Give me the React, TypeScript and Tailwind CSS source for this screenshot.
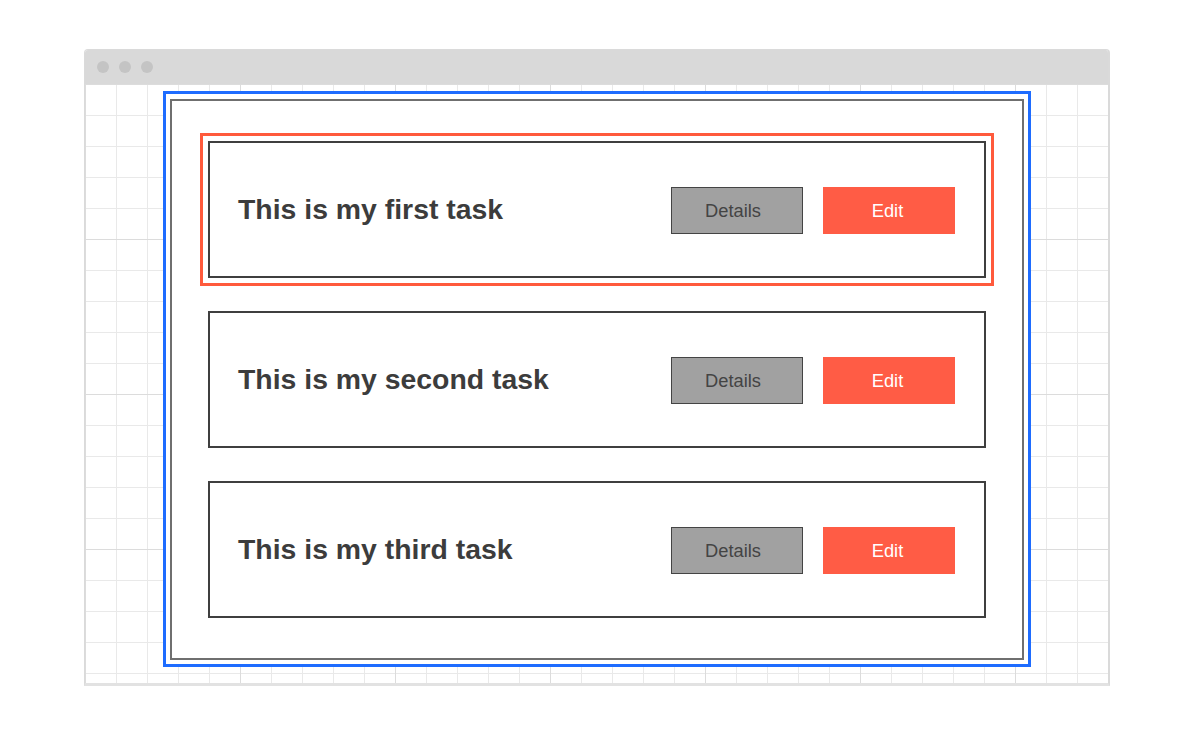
import React from "react";

const tasks = ["This is my first task", "This is my second task", "This is my third task"];

function TaskCard({ title, selected }: { title: string; selected?: boolean }) {
  return (
    <div
      className={
        "flex h-[137px] items-center justify-between border-2 border-[#3f3f3f] bg-white pl-[28px] pr-[29px] " +
        (selected ? "outline-[3px] outline-solid outline-offset-[5px] outline-[#ff5a3c]" : "")
      }
    >
      <div className="text-[28.4px] font-bold leading-none text-[#3c3c3c]">{title}</div>
      <div className="flex items-center gap-[20px] pt-[2px]">
        <button className="flex h-[47px] w-[132px] items-center justify-center border border-[#444444] bg-[#a1a1a1] pr-[8px] pt-[1px] text-[18.3px] text-[#444444]">
          Details
        </button>
        <button className="flex h-[47px] w-[132px] items-center justify-center bg-[#ff5c45] pr-[3px] pt-[1px] text-[18.3px] text-white">
          Edit
        </button>
      </div>
    </div>
  );
}

export default function App() {
  return (
    <div className="min-h-[737px] w-full bg-white pt-[49px] font-['Liberation_Sans',Arial,sans-serif]">
      <div className="ml-[84px] w-[1026px] overflow-hidden rounded-t-[4px] border-l border-r-2 border-b-[3px] border-t border-[#dadada] border-b-[#e2e2e2]">
        <div className="flex h-[34px] items-center gap-[10px] bg-[#d9d9d9] pl-[12px]">
          <div className="h-[12px] w-[12px] rounded-full bg-[#c4c4c4]" />
          <div className="h-[12px] w-[12px] rounded-full bg-[#c4c4c4]" />
          <div className="h-[12px] w-[12px] rounded-full bg-[#c4c4c4]" />
        </div>
        <div className="bg-white bg-[linear-gradient(to_right,#dcdcdc_1px,transparent_1px),linear-gradient(to_bottom,#dcdcdc_1px,transparent_1px),linear-gradient(to_right,#e9e9e9_1px,transparent_1px),linear-gradient(to_bottom,#e9e9e9_1px,transparent_1px)] bg-[size:155px_155px,155px_155px,31px_31px,31px_31px] pb-[16px] pl-[78px] pt-[7px]">
          <div className="w-[868px] border-[3px] border-[#1e6cff] bg-white px-[4px] pb-[4px] pt-[5px]">
            <div className="flex flex-col gap-[33px] border-2 border-[#6f6f6f] bg-white px-[36px] py-[40px]">
              {tasks.map((t, i) => (
                <TaskCard key={t} title={t} selected={i === 0} />
              ))}
            </div>
          </div>
        </div>
      </div>
    </div>
  );
}
